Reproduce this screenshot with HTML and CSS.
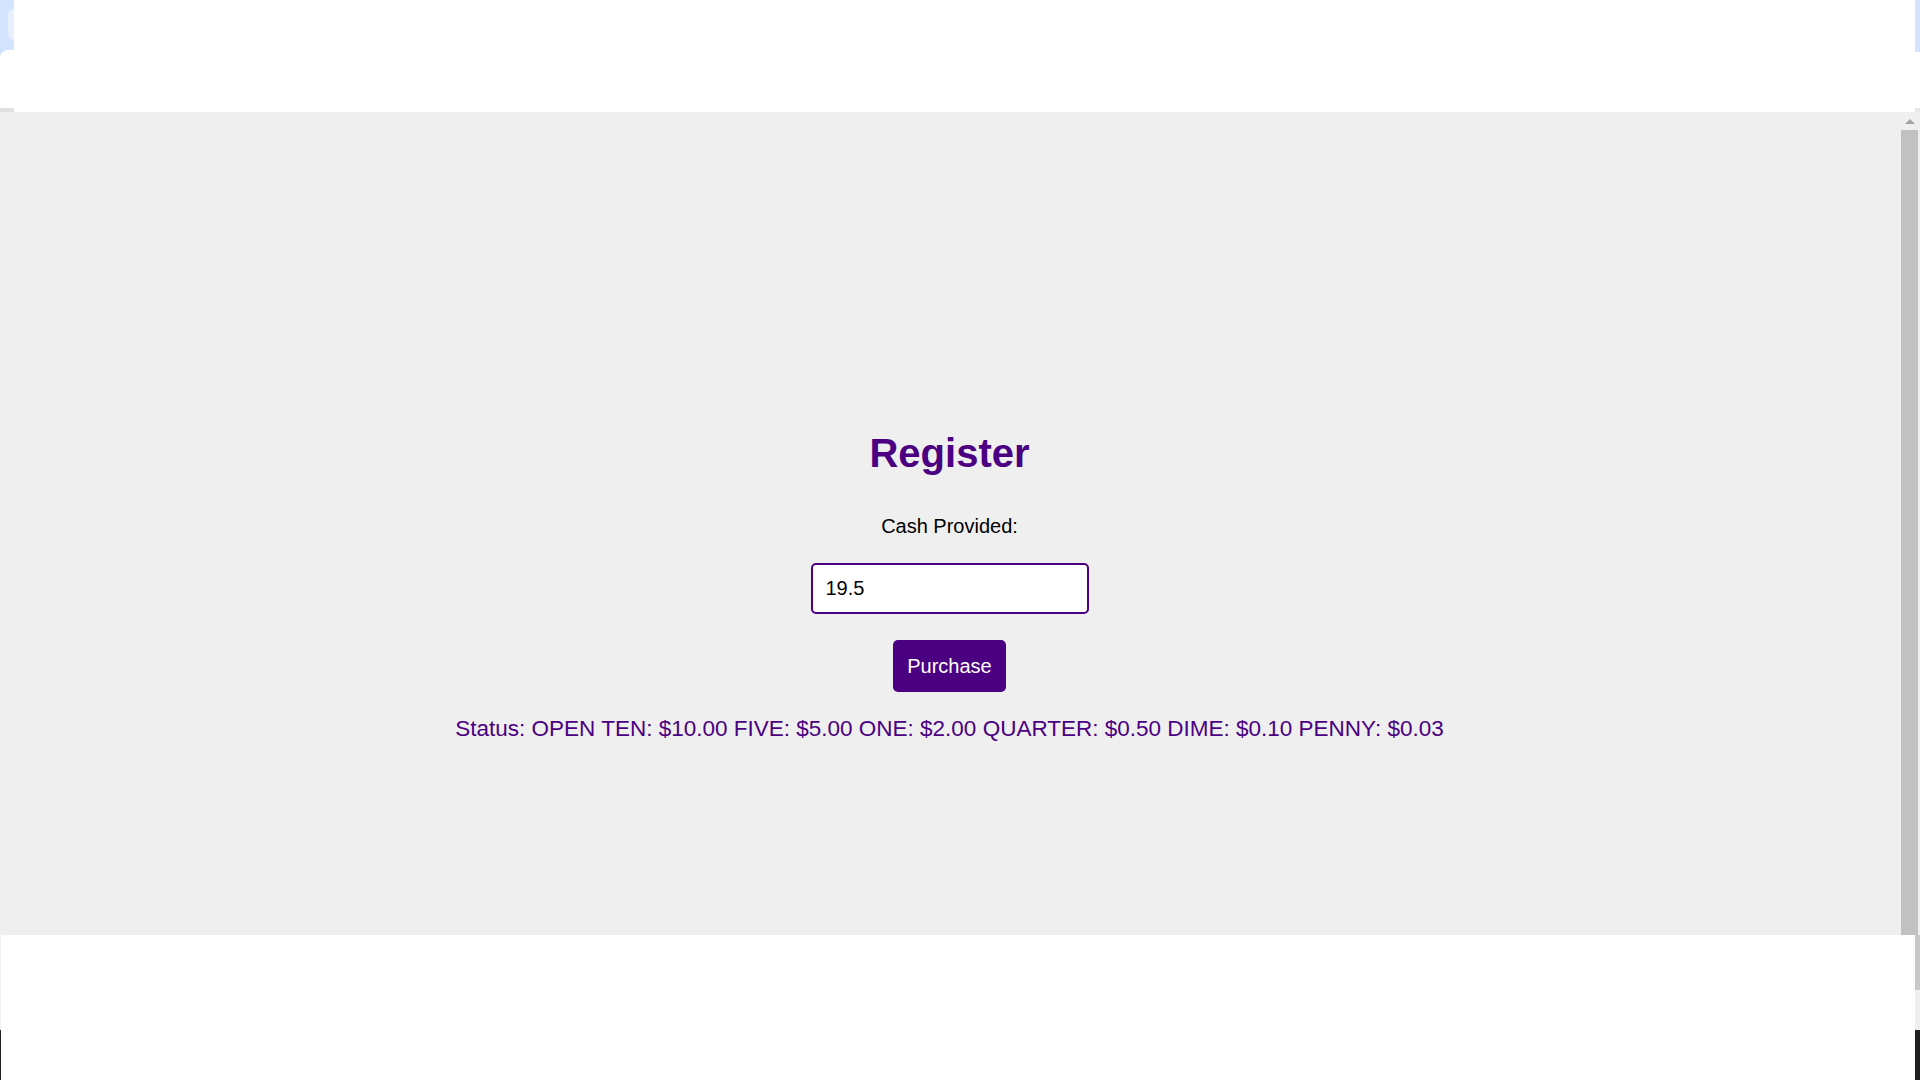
FILE: index.html
```html
<!DOCTYPE html>
<html lang="en">
<head>
<meta charset="utf-8">
<title>Register</title>
<link rel="stylesheet" href="styles.css">
</head>
<body>
<div class="frame">
  <div class="topbar">
    <div class="tl">
      <div class="tl-blue"><div class="tl-tab"></div></div>
      <div class="tl-white"></div>
      <div class="tl-line"></div>
    </div>
    <div class="top-main"></div>
    <div class="tr">
      <div class="tr-blue"></div>
      <div class="tr-white"></div>
      <div class="tr-line"></div>
    </div>
  </div>
  <div class="viewport">
    <main class="page">
      <h1 class="title">Register</h1>
      <label class="cash-label" for="cash">Cash Provided:</label>
      <input class="cash-input" id="cash" type="text" value="19.5">
      <button class="purchase-btn" type="button">Purchase</button>
      <p class="status">Status: OPEN TEN: $10.00 FIVE: $5.00 ONE: $2.00 QUARTER: $0.50 DIME: $0.10 PENNY: $0.03</p>
    </main>
    <div class="scrollbar">
      <div class="arrow-box"><div class="arrow"></div></div>
      <div class="thumb"></div>
    </div>
    <div class="edge"></div>
  </div>
  <div class="bottom">
    <div class="bl"><div class="bl-top"></div><div class="bl-dark"></div></div>
    <div class="bottom-main"></div>
    <div class="br"><div class="br-top"></div><div class="br-mid"></div><div class="br-dark"></div></div>
  </div>
</div>
</body>
</html>
```
FILE: styles.css
```css
* { box-sizing: border-box; }
html, body { margin: 0; padding: 0; }
body {
  width: 1920px;
  height: 1080px;
  overflow: hidden;
  font-family: "Liberation Sans", Arial, sans-serif;
  background: #ffffff;
}
.frame {
  display: flex;
  flex-direction: column;
  width: 1920px;
  height: 1080px;
}

/* top band */
.topbar {
  display: flex;
  height: 112px;
  flex: none;
}
.tl {
  width: 14px;
  display: flex;
  flex-direction: column;
  background: #d3e3fd;
}
.tl-blue {
  height: 50px;
  padding: 9px 0 0 8px;
}
.tl-tab {
  height: 31px;
  background: #e8f0fe;
  border-radius: 8px 0 0 8px;
}
.tl-white {
  height: 58px;
  background: #ffffff;
  border-top-left-radius: 8px;
}
.tl-line {
  height: 4px;
  background: #e0e0e0;
}
.top-main {
  flex: 1;
  background: #ffffff;
}
.tr {
  width: 5px;
  display: flex;
  flex-direction: column;
  background: #ffffff;
}
.tr-blue {
  height: 52px;
  background: #d3e3fd;
}
.tr-white {
  height: 56px;
}
.tr-line {
  height: 4px;
  background: #e6e6e6;
}

/* viewport */
.viewport {
  display: flex;
  height: 823px;
  flex: none;
  background: #efefef;
}
.page {
  flex: 1;
  display: flex;
  flex-direction: column;
  align-items: center;
  padding: 318px 2px 0 0;
}
.title {
  margin: 0;
  font-size: 40px;
  font-weight: bold;
  color: #4b0082;
  line-height: 46px;
}
.cash-label {
  margin-top: 39px;
  font-size: 20px;
  line-height: 23px;
  color: #000000;
}
.cash-input {
  display: block;
  margin-top: 25px;
  width: 278px;
  height: 51px;
  padding: 0 13px;
  font-family: "Liberation Sans", Arial, sans-serif;
  font-size: 20px;
  color: #000000;
  background: #ffffff;
  border: 2px solid #4b0082;
  border-radius: 5px;
  outline: none;
}
.purchase-btn {
  margin-top: 26px;
  height: 52px;
  padding: 0 14px;
  font-family: "Liberation Sans", Arial, sans-serif;
  font-size: 20px;
  color: #ffffff;
  background: #4b0082;
  border: none;
  border-radius: 5px;
}
.status {
  margin: 24px 0 0;
  font-size: 22.5px;
  line-height: 26px;
  color: #4b0082;
}

/* scrollbar */
.scrollbar {
  width: 17px;
  display: flex;
  flex-direction: column;
}
.arrow-box {
  height: 18px;
  display: flex;
  justify-content: center;
  align-items: center;
}
.arrow {
  width: 0;
  height: 0;
  border-left: 5px solid transparent;
  border-right: 5px solid transparent;
  border-bottom: 5px solid #a3a3a3;
}
.thumb {
  flex: 1;
  background: #c1c1c1;
}
.edge {
  width: 2px;
  background: #efefef;
}

/* bottom band */
.bottom {
  display: flex;
  flex: 1;
  background: #ffffff;
}
.bl {
  width: 1px;
  display: flex;
  flex-direction: column;
}
.bl-top {
  height: 95px;
  background: #efefef;
}
.bl-dark {
  flex: 1;
  background: #202020;
}
.bottom-main {
  flex: 1;
}
.br {
  width: 5px;
  display: flex;
  flex-direction: column;
}
.br-top {
  height: 55px;
  background: #c8c8c8;
}
.br-mid {
  height: 40px;
  background: #efefef;
}
.br-dark {
  flex: 1;
  background: #202020;
}
```
